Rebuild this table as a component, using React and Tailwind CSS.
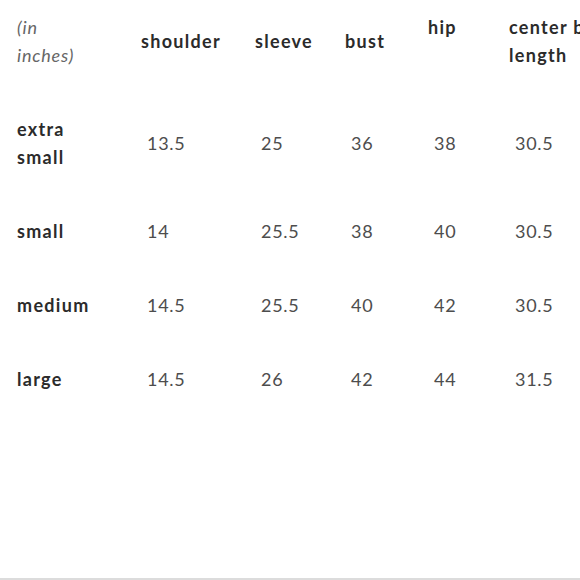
const rows = [
  { size: ['extra', 'small'], values: ['13.5', '25', '36', '38', '30.5'] },
  { size: ['small'], values: ['14', '25.5', '38', '40', '30.5'] },
  { size: ['medium'], values: ['14.5', '25.5', '40', '42', '30.5'] },
  { size: ['large'], values: ['14.5', '26', '42', '44', '31.5'] },
]

export default function App() {
  return (
    <div className="w-[580px] h-[580px] overflow-hidden bg-white border-b-2 border-[#dcdcdc] font-['Lato',sans-serif] text-[18px] leading-[28px] tracking-[0.7px]">
      <table className="table-fixed border-collapse w-[700px]">
        <colgroup>
          <col className="w-[141px]" />
          <col className="w-[114px]" />
          <col className="w-[90px]" />
          <col className="w-[83px]" />
          <col className="w-[81px]" />
          <col className="w-[110px]" />
          <col />
        </colgroup>
        <thead>
          <tr className="text-[#2b2b2b] font-bold text-left tracking-[1.3px]">
            <th className="pl-[17px] pt-[13px] pb-[23px] align-middle font-normal italic tracking-[0.8px] text-[#666]">
              (in<br />inches)
            </th>
            <th className="pt-[13px] pb-[23px] align-middle">shoulder</th>
            <th className="pt-[13px] pb-[23px] align-middle">sleeve</th>
            <th className="pt-[13px] pb-[23px] align-middle">bust</th>
            <th className="pt-[13px] pb-[23px] align-top">hip</th>
            <th className="pt-[13px] pb-[23px] align-middle">center back length</th>
            <th />
          </tr>
        </thead>
        <tbody>
          {rows.map(r => (
            <tr key={r.size.join(' ')}>
              <td className="pl-[17px] py-[23px] align-middle font-bold tracking-[1.3px] text-[#2b2b2b]">
                {r.size.map((s, i) => (
                  <div key={i}>{s}</div>
                ))}
              </td>
              {r.values.map((v, i) => (
                <td key={i} className="pl-[6px] py-[23px] align-middle text-[#4d4d4d]">{v}</td>
              ))}
              <td />
            </tr>
          ))}
        </tbody>
      </table>
    </div>
  )
}
